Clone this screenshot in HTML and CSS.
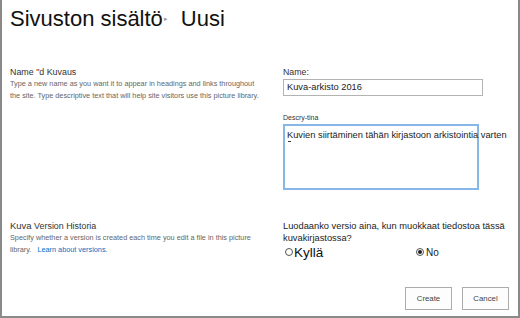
FILE: index.html
```html
<!DOCTYPE html>
<html lang="fi">
<head>
  <meta charset="UTF-8">
  <meta name="viewport" content="width=device-width, initial-scale=1.0">
  <title>Uusi</title>
  <link rel="stylesheet" href="styles.css">
</head>
<body>
  <div class="dialog">
    <div class="title-bar">
      <span class="crumb">Sivuston sisältö</span>
      <span class="crumb-arrow">&#9656;</span>
      <span class="crumb">Uusi</span>
    </div>

    <div class="section name-section">
      <div class="info">
        <div class="info-title">Name "d Kuvaus</div>
        <div class="info-text">Type a new name as you want it to appear in headings and links throughout the site. Type descriptive text that will help site visitors use this picture library.</div>
      </div>
      <div class="fields">
        <label class="field-label" for="name">Name:</label>
        <div class="name-input" id="name">Kuva-arkisto 2016</div>
        <label class="small-label" for="desc">Descry-tina</label>
        <div class="desc-box" id="desc">
          <span class="caret"></span>Kuvien siirtäminen tähän kirjastoon arkistointia varten
        </div>
      </div>
    </div>

    <div class="section version-section">
      <div class="info">
        <div class="info-title"><span class="kuva">Kuva</span> Version Historia</div>
        <div class="info-text">Specify whether a version is created each time you edit a file in this picture library. <a href="#" class="learn">Learn about versions.</a></div>
      </div>
      <div class="fields">
        <div class="question">Luodaanko versio aina, kun muokkaat tiedostoa tässä kuvakirjastossa?</div>
        <div class="radios">
          <label class="radio radio-yes"><span class="dot"></span>Kyllä</label>
          <label class="radio radio-no"><span class="dot checked"></span>No</label>
        </div>
      </div>
    </div>

    <div class="actions">
      <button class="btn">Create</button>
      <button class="btn">Cancel</button>
    </div>
  </div>
</body>
</html>
```

FILE: styles.css
```css
* {
  box-sizing: border-box;
}

body {
  margin: 0;
  padding: 0;
  background: #ffffff;
  font-family: 'Liberation Sans', Arial, sans-serif;
  color: #222;
}

.dialog {
  width: 520px;
  height: 318px;
  border-left: 2px solid #8a8a8a;
  border-right: 2px solid #8a8a8a;
  border-bottom: 2px solid #8a8a8a;
  display: flex;
  flex-direction: column;
}

.title-bar {
  display: flex;
  align-items: center;
  padding: 6px 0 0 8px;
  height: 32px;
  font-size: 22px;
  line-height: 26px;
  color: #111;
}

.crumb-arrow {
  font-size: 7px;
  color: #999;
  margin: 0 13px 0 1px;
}

.section {
  display: grid;
  grid-template-columns: 253px 1fr;
  column-gap: 20px;
  padding-left: 8px;
}

.name-section {
  margin-top: 34px;
  height: 154px;
}

.info-title {
  font-size: 8.9px;
  line-height: 12px;
  color: #333;
}

.info-text {
  font-size: 7.3px;
  line-height: 12px;
  color: #666;
}

.kuva {
  font-size: 9.5px;
}

.learn {
  color: #0072c6;
  text-decoration: none;
  margin-left: 4px;
}

.field-label {
  display: block;
  font-size: 8.8px;
  line-height: 12px;
  color: #333;
}

.name-input {
  margin-top: 1px;
  width: 200px;
  height: 17px;
  border: 1px solid #b3b3b3;
  padding: 0 3px;
  font-size: 9.3px;
  line-height: 15px;
  color: #222;
}

.small-label {
  display: block;
  margin-top: 17px;
  font-size: 7px;
  line-height: 10px;
  color: #333;
}

.desc-box {
  position: relative;
  margin-top: 1px;
  width: 196px;
  height: 66px;
  border: 2px solid #86b7e6;
  padding: 3px 2px;
  font-size: 9.3px;
  line-height: 12px;
  white-space: nowrap;
  color: #222;
}

.caret {
  position: absolute;
  left: 3px;
  top: 15px;
  width: 3px;
  height: 1px;
  background: #333;
}

.version-section {
  height: 62px;
}

.question {
  font-size: 9.3px;
  line-height: 12px;
  color: #222;
  width: 225px;
}

.radios {
  display: flex;
  align-items: center;
  height: 16px;
}

.radio {
  display: flex;
  align-items: center;
}

.radio-yes {
  width: 130px;
  font-size: 13.5px;
  color: #111;
}

.radio-no {
  font-size: 10px;
  color: #222;
}

.dot {
  width: 8px;
  height: 8px;
  border: 1px solid #555;
  border-radius: 50%;
  margin: 0 1px 0 2px;
  display: inline-flex;
  align-items: center;
  justify-content: center;
}

.radio-no .dot {
  margin: 0 2px 0 3px;
}

.dot.checked::after {
  content: "";
  width: 4px;
  height: 4px;
  border-radius: 50%;
  background: #222;
}

.actions {
  display: flex;
  justify-content: flex-end;
  gap: 10px;
  padding: 5px 9px 0 0;
}

.btn {
  width: 47px;
  height: 23px;
  border: 1px solid #acacac;
  background: #fdfdfd;
  font-family: 'Liberation Sans', Arial, sans-serif;
  font-size: 7.8px;
  color: #444;
  padding: 0;
}
```
